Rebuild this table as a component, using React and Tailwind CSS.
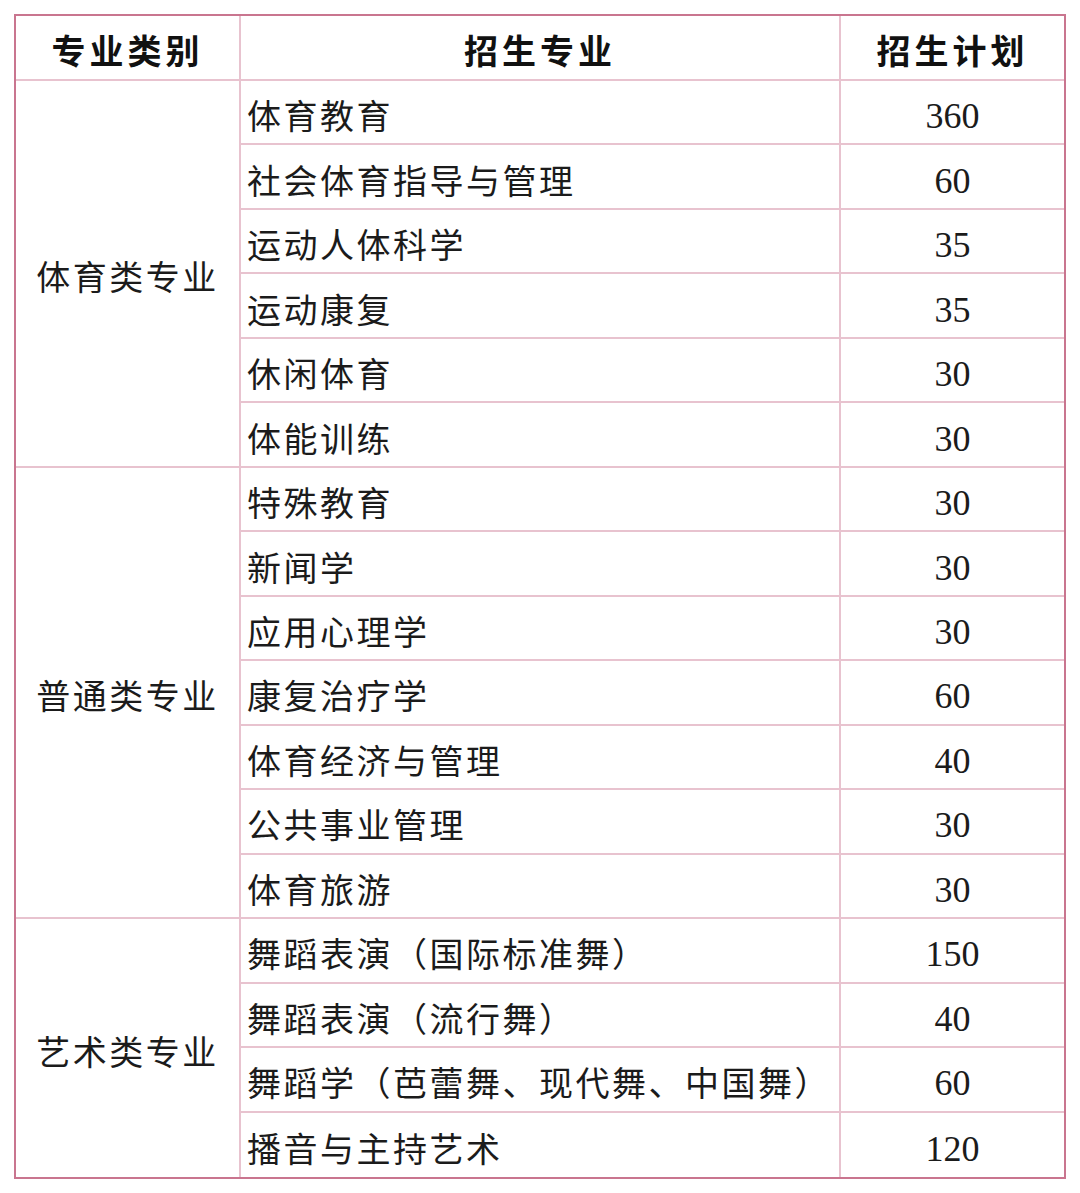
const groups = [
  {
    name: '体育类专业',
    span: 'row-span-6',
    items: [
      ['体育教育', '360'],
      ['社会体育指导与管理', '60'],
      ['运动人体科学', '35'],
      ['运动康复', '35'],
      ['休闲体育', '30'],
      ['体能训练', '30'],
    ],
  },
  {
    name: '普通类专业',
    span: 'row-span-7',
    items: [
      ['特殊教育', '30'],
      ['新闻学', '30'],
      ['应用心理学', '30'],
      ['康复治疗学', '60'],
      ['体育经济与管理', '40'],
      ['公共事业管理', '30'],
      ['体育旅游', '30'],
    ],
  },
  {
    name: '艺术类专业',
    span: 'row-span-4',
    items: [
      ['舞蹈表演（国际标准舞）', '150'],
      ['舞蹈表演（流行舞）', '40'],
      ['舞蹈学（芭蕾舞、现代舞、中国舞）', '60'],
      ['播音与主持艺术', '120'],
    ],
  },
];

const cjk = "font-['Noto_Sans_CJK_SC',sans-serif]";
const num = "font-['Liberation_Serif','Noto_Sans_CJK_SC',serif]";

export default function App() {
  let row = 0;
  const total = groups.reduce((n, g) => n + g.items.length, 0);
  const cells = [];

  groups.forEach((g, gi) => {
    const lastGroup = gi === groups.length - 1;
    g.items.forEach(([major, plan], i) => {
      row += 1;
      const last = row === total;
      if (i === 0) {
        cells.push(
          <div
            key={`g${gi}`}
            className={`${g.span} flex items-center justify-center pt-[4px] border-r-2 border-[#e8c3cf] ${lastGroup ? '' : 'border-b-2'} ${cjk} text-[34px] tracking-[2.5px] text-[#1b1b1b]`}
          >
            {g.name}
          </div>
        );
      }
      cells.push(
        <div
          key={`m${row}`}
          className={`flex items-center pl-[6px] pt-[5px] border-r-2 border-[#e8c3cf] ${last ? '' : 'border-b-2'} ${cjk} text-[34px] tracking-[2.5px] text-[#1b1b1b] whitespace-nowrap`}
        >
          {major}
        </div>
      );
      cells.push(
        <div
          key={`p${row}`}
          className={`flex items-center justify-center pt-[8px] border-[#e8c3cf] ${last ? '' : 'border-b-2'} ${num} text-[36px] text-[#1b1b1b]`}
        >
          {plan}
        </div>
      );
    });
  });

  return (
    <div className="w-[1080px] h-[1193px] bg-white pt-[14px] pl-[14px]">
      <div className="w-[1052px] border-2 border-[#c9758f]">
        <div className="grid grid-cols-[225px_600px_223px] grid-rows-[65px_repeat(17,minmax(0,1fr))] h-[1161px]">
          <div className={`flex items-center justify-center pt-[4px] border-r-2 border-b-2 border-[#e8c3cf] ${cjk} font-bold text-[34px] tracking-[4px] text-[#111]`}>
            专业类别
          </div>
          <div className={`flex items-center justify-center pt-[4px] border-r-2 border-b-2 border-[#e8c3cf] ${cjk} font-bold text-[34px] tracking-[4px] text-[#111]`}>
            招生专业
          </div>
          <div className={`flex items-center justify-center pt-[4px] border-b-2 border-[#e8c3cf] ${cjk} font-bold text-[34px] tracking-[4px] text-[#111]`}>
            招生计划
          </div>
          {cells}
        </div>
      </div>
    </div>
  );
}
